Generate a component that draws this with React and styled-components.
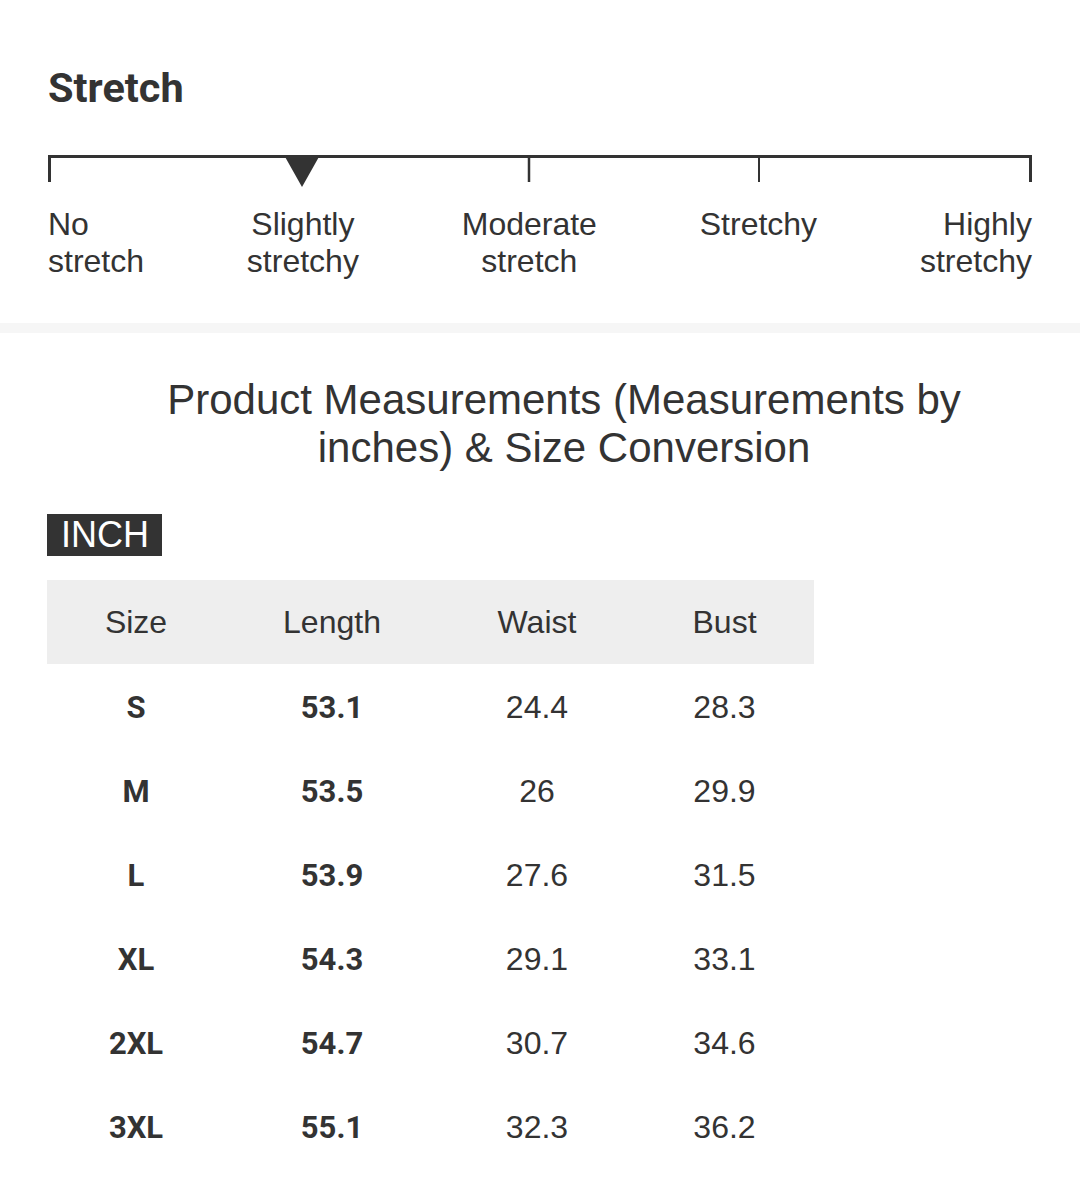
import styled, { createGlobalStyle } from "styled-components";

const GlobalStyle = createGlobalStyle`
  body {
    margin: 0;
    background: #fff;
    color: #333;
    font-family: "Liberation Sans", Arial, sans-serif;
  }
`;

const levels = [
  { label: ["No", "stretch"], align: "left" },
  { label: ["Slightly", "stretchy"], align: "center" },
  { label: ["Moderate", "stretch"], align: "center" },
  { label: ["Stretchy"], align: "center" },
  { label: ["Highly", "stretchy"], align: "right" },
];

const rows = [
  ["S", "53.1", "24.4", "28.3"],
  ["M", "53.5", "26", "29.9"],
  ["L", "53.9", "27.6", "31.5"],
  ["XL", "54.3", "29.1", "33.1"],
  ["2XL", "54.7", "30.7", "34.6"],
  ["3XL", "55.1", "32.3", "36.2"],
];

const Page = styled.div`
  width: 1080px;
  min-height: 1188px;
`;

const StretchSection = styled.section`
  padding: 67px 48px 43px;
`;

const Heading = styled.h2`
  margin: 0;
  font-family: Roboto, "Liberation Sans", sans-serif;
  font-weight: 700;
  font-size: 41.5px;
  line-height: 41px;
  color: #333;
`;

const Scale = styled.svg`
  display: block;
  margin-top: 47px;
`;

const Labels = styled.div`
  display: flex;
  justify-content: space-between;
  margin-top: 18px;
`;

const Label = styled.div`
  font-size: 32px;
  line-height: 37px;
  text-align: ${(p) => p.$align};
`;

const Divider = styled.div`
  height: 10px;
  background: #f6f6f6;
`;

const SizeSection = styled.section`
  padding: 43px 0 0 47px;
`;

const Title = styled.h3`
  margin: 0 0 0 1px;
  font-weight: 400;
  font-size: 42px;
  line-height: 48px;
  text-align: center;
  color: #333;
`;

const Badge = styled.span`
  display: inline-block;
  margin-top: 42px;
  padding: 0 13px 0 14px;
  background: #333;
  color: #fff;
  font-size: 36px;
  line-height: 42px;
`;

const Table = styled.div`
  display: grid;
  grid-template-columns: 178px 214px 196px 179px;
  width: 767px;
  margin-top: 24px;
`;

const HeadCell = styled.div`
  height: 84px;
  display: flex;
  align-items: center;
  justify-content: center;
  background: #eeeeee;
  font-size: 32px;
`;

const Cell = styled.div`
  height: 84px;
  display: flex;
  align-items: center;
  justify-content: center;
  padding-top: 2px;
  box-sizing: border-box;
  font-size: ${(p) => (p.$bold ? "31px" : "32px")};
  font-family: ${(p) =>
    p.$bold ? 'Roboto, "Liberation Sans", sans-serif' : '"Liberation Sans", Arial, sans-serif'};
  font-weight: ${(p) => (p.$bold ? 700 : 400)};
`;

const ScaleBar = () => (
  <Scale width="984" height="33" viewBox="0 0 984 33">
    <g stroke="#333" fill="none">
      <line x1="0" y1="1.5" x2="984" y2="1.5" strokeWidth="3" />
      <line x1="1.5" y1="0" x2="1.5" y2="27" strokeWidth="3" />
      <line x1="481" y1="0" x2="481" y2="27" strokeWidth="2.5" />
      <line x1="711" y1="0" x2="711" y2="27" strokeWidth="2" />
      <line x1="982.5" y1="0" x2="982.5" y2="27" strokeWidth="3" />
    </g>
    <polygon points="236,0 272,0 254,32" fill="#333" />
  </Scale>
);

export default function App() {
  return (
    <Page>
      <GlobalStyle />
      <StretchSection>
        <Heading>Stretch</Heading>
        <ScaleBar />
        <Labels>
          {levels.map((l) => (
            <Label key={l.label.join(" ")} $align={l.align}>
              {l.label.map((line) => (
                <div key={line}>{line}</div>
              ))}
            </Label>
          ))}
        </Labels>
      </StretchSection>
      <Divider />
      <SizeSection>
        <Title>
          Product Measurements (Measurements by
          <br />
          inches) &amp; Size Conversion
        </Title>
        <Badge>INCH</Badge>
        <Table>
          {["Size", "Length", "Waist", "Bust"].map((h) => (
            <HeadCell key={h}>{h}</HeadCell>
          ))}
          {rows.map((r) =>
            r.map((v, i) => (
              <Cell key={r[0] + i} $bold={i < 2}>
                {v}
              </Cell>
            ))
          )}
        </Table>
      </SizeSection>
    </Page>
  );
}
